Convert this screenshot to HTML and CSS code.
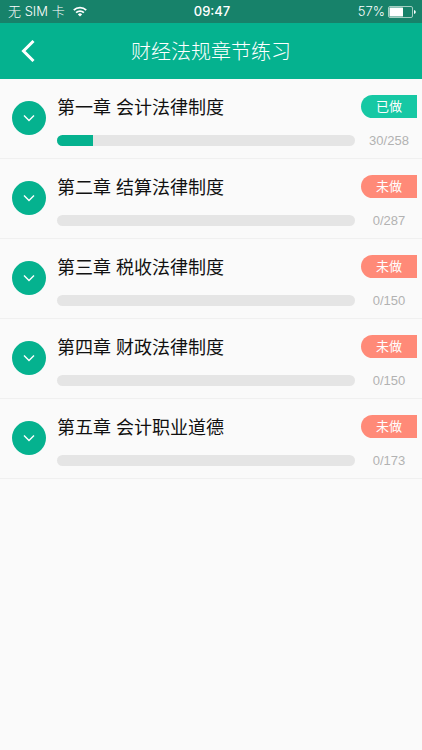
FILE: index.html
```
<!DOCTYPE html>
<html lang="zh-CN">
<head>
  <meta charset="UTF-8" />
  <meta name="viewport" content="width=device-width, initial-scale=1.0" />
  <title>财经法规章节练习</title>
  <link rel="stylesheet" href="styles.css">
</head>
<body>
  <div class="status-bar">
    <div class="carrier">
      <span>无 SIM 卡</span>
      <svg class="wifi" viewBox="0 0 14 11" width="14" height="11" fill="none" stroke="#fff" stroke-width="1.8">
        <path d="M0.8 4.2 A8.8 8.8 0 0 1 13.2 4.2" />
        <path d="M3.1 6.7 A5.5 5.5 0 0 1 10.9 6.7" />
        <path d="M7 10.6 L4.9 8.4 A3 3 0 0 1 9.1 8.4 Z" fill="#fff" stroke="none" />
      </svg>
    </div>
    <div class="time">09:47</div>
    <div class="battery">
      <span>57%</span>
      <svg viewBox="0 0 28 12" width="28" height="12">
        <rect x="0.5" y="0.5" width="24" height="11" rx="1.5" fill="none" stroke="#a5d0c3" />
        <rect x="1.5" y="1.5" width="13.5" height="9" rx="0.5" fill="#fff" />
        <path d="M26 4 Q27.8 4.3 27.8 6 T26 8 Z" fill="#fff" />
      </svg>
    </div>
  </div>

  <header class="nav">
    <button class="back" aria-label="返回">
      <svg viewBox="0 0 14 22" width="14" height="22" fill="none" stroke="#fff" stroke-width="3">
        <path d="M12.5 1 L2.5 11 L12.5 21" />
      </svg>
    </button>
    <h1>财经法规章节练习</h1>
  </header>

  <main class="chapters">
    <section class="chapter">
      <button class="toggle" aria-label="展开第一章">
        <svg viewBox="0 0 12 8" width="12" height="8"><path d="M1 1.5 L6 6.5 L11 1.5" /></svg>
      </button>
      <div class="info">
        <h2>第一章 会计法律制度</h2>
        <div class="bar"><div class="fill" style="width: 12%"></div></div>
      </div>
      <div class="state">
        <span class="badge done">已做</span>
        <span class="count">30/258</span>
      </div>
    </section>

    <section class="chapter">
      <button class="toggle" aria-label="展开第二章">
        <svg viewBox="0 0 12 8" width="12" height="8"><path d="M1 1.5 L6 6.5 L11 1.5" /></svg>
      </button>
      <div class="info">
        <h2>第二章 结算法律制度</h2>
        <div class="bar"><div class="fill" style="width: 0%"></div></div>
      </div>
      <div class="state">
        <span class="badge">未做</span>
        <span class="count">0/287</span>
      </div>
    </section>

    <section class="chapter">
      <button class="toggle" aria-label="展开第三章">
        <svg viewBox="0 0 12 8" width="12" height="8"><path d="M1 1.5 L6 6.5 L11 1.5" /></svg>
      </button>
      <div class="info">
        <h2>第三章 税收法律制度</h2>
        <div class="bar"><div class="fill" style="width: 0%"></div></div>
      </div>
      <div class="state">
        <span class="badge">未做</span>
        <span class="count">0/150</span>
      </div>
    </section>

    <section class="chapter">
      <button class="toggle" aria-label="展开第四章">
        <svg viewBox="0 0 12 8" width="12" height="8"><path d="M1 1.5 L6 6.5 L11 1.5" /></svg>
      </button>
      <div class="info">
        <h2>第四章 财政法律制度</h2>
        <div class="bar"><div class="fill" style="width: 0%"></div></div>
      </div>
      <div class="state">
        <span class="badge">未做</span>
        <span class="count">0/150</span>
      </div>
    </section>

    <section class="chapter">
      <button class="toggle" aria-label="展开第五章">
        <svg viewBox="0 0 12 8" width="12" height="8"><path d="M1 1.5 L6 6.5 L11 1.5" /></svg>
      </button>
      <div class="info">
        <h2>第五章 会计职业道德</h2>
        <div class="bar"><div class="fill" style="width: 0%"></div></div>
      </div>
      <div class="state">
        <span class="badge">未做</span>
        <span class="count">0/173</span>
      </div>
    </section>
  </main>
</body>
</html>
```
FILE: styles.css
```
* { margin: 0; padding: 0; box-sizing: border-box; }
body {
  font-family: "Liberation Sans", "Noto Sans CJK SC", sans-serif;
  background-color: #fafafa;
  color: #111;
}
button {
  border: none;
  background: none;
  cursor: pointer;
}
svg { display: block; }

/* status bar */
.status-bar {
  display: grid;
  grid-template-columns: 1fr auto 1fr;
  align-items: center;
  height: 23px;
  padding: 0 6px 0 8px;
  background-color: #17826a;
  color: #fff;
  font-family: Inter, "Noto Sans CJK SC", sans-serif;
  font-size: 13px;
  line-height: 23px;
}
.carrier, .battery {
  display: flex;
  align-items: center;
  font-weight: 300;
}
.carrier { gap: 8px; }
.battery { gap: 3px; justify-content: flex-end; }
.time { font-weight: 500; }

/* title bar */
.nav {
  display: grid;
  grid-template-columns: 56px 1fr 56px;
  align-items: center;
  height: 56px;
  background-color: #05b28f;
  color: #fff;
}
.back {
  display: flex;
  align-items: center;
  justify-content: center;
  height: 56px;
}
.nav h1 {
  padding-bottom: 2px;
  font-size: 20px;
  font-weight: 300;
  text-align: center;
}

/* chapter list */
.chapter {
  display: flex;
  align-items: flex-start;
  height: 80px;
  padding: 16px 5px 0 12px;
  border-bottom: 1px solid #f0f0f0;
}
.toggle {
  display: flex;
  align-items: center;
  justify-content: center;
  width: 34px;
  height: 34px;
  margin-top: 6px;
  border-radius: 50%;
  background-color: #05b28f;
}
.toggle path {
  fill: none;
  stroke: #fff;
  stroke-width: 1.4;
}
.info {
  flex: 1;
  margin: 0 6px 0 11px;
}
.info h2 {
  font-size: 18px;
  font-weight: 400;
  line-height: 26px;
  margin-bottom: 14px;
}
.bar {
  height: 11px;
  border-radius: 6px;
  background-color: #e5e5e5;
  overflow: hidden;
}
.fill {
  height: 100%;
  background-color: #05b28f;
}
.state {
  display: flex;
  flex-direction: column;
  gap: 15px;
  width: 56px;
  text-align: center;
}
.badge {
  height: 23px;
  border-radius: 12px 0 0 12px;
  background-color: #ff8a78;
  color: #fff;
  font-size: 13px;
  line-height: 23px;
}
.done { background-color: #16c8a4; }
.count {
  color: #b2b2b2;
  font-size: 13px;
  line-height: 16px;
}
```
